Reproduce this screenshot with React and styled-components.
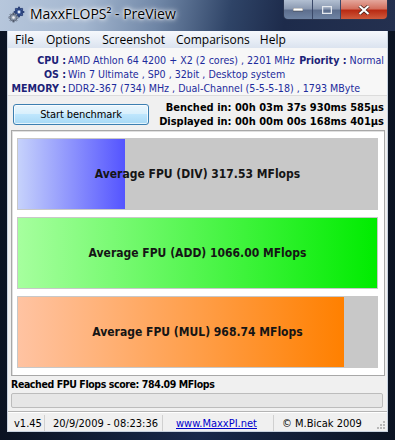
import React from "react";
import styled, { createGlobalStyle } from "styled-components";

const GlobalStyle = createGlobalStyle`
  html, body {
    margin: 0;
    padding: 0;
    background: #1a2440;
  }
  * {
    box-sizing: border-box;
  }
`;

const tahoma = `"DejaVu Sans Condensed", "DejaVu Sans", sans-serif`;
const segoe = `"Open Sans", "Noto Sans", sans-serif`;

const Window = styled.div`
  width: 395px;
  height: 440px;
  display: flex;
  flex-direction: column;
  overflow: hidden;
  background: linear-gradient(90deg, #0b1322 0%, #18284a 50%, #0b1322 100%);
`;

const TitleBar = styled.div`
  height: 31px;
  flex: none;
  display: flex;
  align-items: flex-start;
  padding-left: 8px;
  background: linear-gradient(
    100deg,
    #b7c7dc 0%,
    #a3b6cf 22%,
    #6f86a6 40%,
    #2f4467 58%,
    #1d2b4b 72%,
    #24304f 100%
  );
`;

const TitleIcon = styled.svg`
  width: 17px;
  height: 17px;
  margin-top: 6px;
  flex: none;
`;

const TitleText = styled.div`
  margin: 4px 0 0 5px;
  font-family: ${segoe};
  font-size: 14px;
  color: #000;
  text-shadow: 0 0 6px #fff, 0 0 4px #fff, 0 0 2px #fff;
  flex: 1;
`;

const CaptionButtons = styled.div`
  display: flex;
  margin-right: 7px;
  border: 1px solid #2a3550;
  border-top: none;
  border-radius: 0 0 5px 5px;
  overflow: hidden;
`;

const CaptionButton = styled.div`
  width: ${(p) => (p.close ? "47px" : "28px")};
  height: 19px;
  display: flex;
  align-items: center;
  justify-content: center;
  border-left: ${(p) => (p.first ? "none" : "1px solid #3a4868")};
  background: ${(p) =>
    p.close
      ? "linear-gradient(180deg, #e4a79c 0%, #d3705f 45%, #b92b14 55%, #cf5a3c 100%)"
      : "linear-gradient(180deg, #b3c0d2 0%, #8c9ab2 45%, #5e6f8e 55%, #6e83a3 100%)"};
`;

const Frame = styled.div`
  flex: 1;
  display: flex;
  padding: 0 7px 8px 7px;
`;

const Client = styled.div`
  flex: 1;
  min-width: 0;
  display: flex;
  flex-direction: column;
  background: #f0f0f0;
  border: 1px solid #c8d2df;
  border-top: none;
`;

const MenuBar = styled.div`
  height: 17px;
  flex: none;
  display: flex;
  align-items: center;
  padding-left: 4px;
  background: linear-gradient(180deg, #f6f8fc 0%, #e6ecf5 60%, #dbe3ef 100%);
  font-family: ${segoe};
  font-size: 12px;
  color: #000;
`;

const MenuItem = styled.span`
  padding: 0 5px 0 3px;
  margin-right: ${(p) => p.gap || 0}px;
`;

const InfoPanel = styled.div`
  display: grid;
  grid-template-columns: 60px auto minmax(0, 1fr) auto;
  padding: 5px 3px 0 0;
  height: 48px;
  flex: none;
  border-bottom: 1px solid #dcdcdc;
  background: #f7f7f7;
  font-family: ${tahoma};
  font-size: 10.6px;
  line-height: 14px;
`;

const InfoLabel = styled.span`
  text-align: right;
  font-weight: bold;
  color: #1c2378;
  padding-right: 2px;
`;

const InfoValue = styled.span`
  color: #1d2b9c;
  white-space: nowrap;
  grid-column: ${(p) => (p.wide ? "2 / 5" : "auto")};
`;

const Priority = styled.span`
  grid-column: 4;
  color: #1d2b9c;
  white-space: nowrap;

  b {
    color: #1c2378;
  }
`;

const ActionRow = styled.div`
  height: 34px;
  flex: none;
  display: flex;
  justify-content: space-between;
  align-items: flex-start;
  padding: 5px 3px 0 5px;
`;

const StartButton = styled.button`
  width: 136px;
  height: 21px;
  margin-top: 3px;
  border: 1px solid #3c7fb1;
  border-radius: 3px;
  background: linear-gradient(180deg, #eaf6fd 0%, #d9f0fc 45%, #bee6fd 50%, #a7d9f5 100%);
  box-shadow: inset 0 0 0 1px rgba(255, 255, 255, 0.7);
  font-family: ${tahoma};
  font-size: 11px;
  letter-spacing: -0.1px;
  color: #000;
  padding: 0;
`;

const Timings = styled.div`
  text-align: right;
  font-family: ${tahoma};
  font-weight: bold;
  font-size: 11px;
  line-height: 14px;
  color: #000;
`;

const BarsPanel = styled.div`
  flex: none;
  display: flex;
  flex-direction: column;
  gap: 7px;
  margin: 0 2px 0 3px;
  padding: 7px 6px 7px 5px;
  background: #fff;
  border: 1px solid #a8a8a8;
  box-shadow: inset 1px 1px 0 #e0e0e0;
`;

const Bar = styled.div`
  position: relative;
  height: 72px;
  padding: 1px;
  background: #c8c8c8;
`;

const Fill = styled.div`
  height: 100%;
  background: linear-gradient(90deg, ${(p) => p.from} 0%, ${(p) => p.to} 100%);
`;

const BarLabel = styled.div`
  position: absolute;
  inset: 0;
  display: flex;
  align-items: center;
  justify-content: center;
  font-family: ${tahoma};
  font-weight: bold;
  font-size: 12px;
  color: #151515;
`;

const Score = styled.div`
  flex: none;
  padding: 1px 3px 0;
  font-family: ${tahoma};
  font-weight: bold;
  font-size: 10.5px;
  letter-spacing: -0.4px;
  line-height: 14px;
  color: #000;
`;

const Progress = styled.div`
  flex: none;
  height: 15px;
  margin: 2px 4px 3px 3px;
  background: #e6e6e6;
  border: 1px solid #bcbcbc;
  border-radius: 2px;
`;

const StatusBar = styled.div`
  flex: 1;
  display: flex;
  align-items: stretch;
  padding-top: 3px;
  border-top: 1px solid #b4b4b4;
  box-shadow: inset 0 1px 0 #fff;
  font-family: ${tahoma};
  font-size: 11px;
  color: #000;
`;

const StatusCell = styled.div`
  width: ${(p) => p.w}px;
  display: flex;
  align-items: center;
  padding-left: ${(p) => p.pad || 5}px;
  border-right: ${(p) => (p.last ? "none" : "1px solid #d0d0d0")};
  white-space: nowrap;
`;

const Link = styled.a`
  color: #0000cc;
  text-decoration: underline;
`;

const Grip = styled.svg`
  margin-left: auto;
  margin-right: 2px;
  align-self: flex-end;
  margin-bottom: 2px;
`;

const bars = [
  { name: "DIV", value: 317.53, from: "#c6d2fb", to: "#5454ff" },
  { name: "ADD", value: 1066.0, from: "#a6ff9e", to: "#00ec00" },
  { name: "MUL", value: 968.74, from: "#ffc3a2", to: "#ff8000" },
];

function Gears() {
  return (
    <TitleIcon viewBox="0 0 17 17">
      <g fill="#3d5a9a" stroke="#1c2f60" strokeWidth="0.5">
        <circle cx="11" cy="6" r="4" />
        {[0, 45, 90, 135, 180, 225, 270, 315].map((a) => (
          <rect key={a} x="10.2" y="1" width="1.6" height="2.2" transform={`rotate(${a} 11 6)`} />
        ))}
      </g>
      <circle cx="11" cy="6" r="1.4" fill="#dfe8f6" />
      <g fill="#9aa6b8" stroke="#4c5668" strokeWidth="0.5">
        <circle cx="5.5" cy="11.5" r="3.6" />
        {[0, 45, 90, 135, 180, 225, 270, 315].map((a) => (
          <rect key={a} x="4.8" y="6.9" width="1.4" height="2" transform={`rotate(${a} 5.5 11.5)`} />
        ))}
      </g>
      <circle cx="5.5" cy="11.5" r="1.2" fill="#f0f0f0" />
    </TitleIcon>
  );
}

export default function App() {
  const max = Math.max(...bars.map((b) => b.value));

  return (
    <>
      <GlobalStyle />
      <Window>
        <TitleBar>
          <Gears />
          <TitleText>
            MaxxFLOPS² - PreView
          </TitleText>
          <CaptionButtons>
            <CaptionButton first>
              <svg width="10" height="4">
                <rect x="0" y="0" width="10" height="3" fill="#fff" stroke="#333" strokeWidth="0.5" />
              </svg>
            </CaptionButton>
            <CaptionButton>
              <svg width="10" height="8">
                <rect x="0.5" y="0.5" width="9" height="7" fill="none" stroke="#e4e8ee" strokeWidth="1.5" />
              </svg>
            </CaptionButton>
            <CaptionButton close>
              <svg width="12" height="10" viewBox="0 0 12 10">
                <path d="M1.5 1 L10.5 9 M10.5 1 L1.5 9" stroke="#3a1a14" strokeWidth="3.4" />
                <path d="M1.5 1 L10.5 9 M10.5 1 L1.5 9" stroke="#fff" strokeWidth="2.2" />
              </svg>
            </CaptionButton>
          </CaptionButtons>
        </TitleBar>
        <Frame>
          <Client>
            <MenuBar>
              <MenuItem gap={4}>File</MenuItem>
              <MenuItem gap={4}>Options</MenuItem>
              <MenuItem gap={3}>Screenshot</MenuItem>
              <MenuItem gap={2}>Comparisons</MenuItem>
              <MenuItem>Help</MenuItem>
            </MenuBar>

            <InfoPanel>
              <InfoLabel>CPU :</InfoLabel>
              <InfoValue>AMD Athlon 64 4200 + X2 (2 cores) , 2201 MHz</InfoValue>
              <span />
              <Priority>
                <b>Priority :</b> Normal
              </Priority>
              <InfoLabel>OS :</InfoLabel>
              <InfoValue wide>Win 7 Ultimate , SP0 , 32bit , Desktop system</InfoValue>
              <InfoLabel>MEMORY :</InfoLabel>
              <InfoValue wide>DDR2-367 (734) MHz , Dual-Channel (5-5-5-18) , 1793 MByte</InfoValue>
            </InfoPanel>

            <ActionRow>
              <StartButton type="button">Start benchmark</StartButton>
              <Timings>
                <div>Benched in: 00h 03m 37s 930ms 585µs</div>
                <div>Displayed in: 00h 00m 00s 168ms 401µs</div>
              </Timings>
            </ActionRow>

            <BarsPanel>
              {bars.map((b) => (
                <Bar key={b.name}>
                  <Fill
                    from={b.from}
                    to={b.to}
                    style={{ width: `${(b.value / max) * 100}%` }}
                  />
                  <BarLabel>
                    Average FPU ({b.name}) {b.value.toFixed(2)} MFlops
                  </BarLabel>
                </Bar>
              ))}
            </BarsPanel>

            <Score>Reached FPU Flops score: 784.09 MFlops</Score>
            <Progress />

            <StatusBar>
              <StatusCell w={37} pad={6}>v1.45</StatusCell>
              <StatusCell w={118} pad={8}>20/9/2009 - 08:23:36</StatusCell>
              <StatusCell w={111} pad={13}>
                <Link href="#">www.MaxxPI.net</Link>
              </StatusCell>
              <StatusCell w={96} pad={8} last>
                © M.Bicak 2009
              </StatusCell>
              <Grip width="8" height="8" viewBox="0 0 8 8">
                {[
                  [6, 0],
                  [6, 3],
                  [3, 3],
                  [6, 6],
                  [3, 6],
                  [0, 6],
                ].map(([x, y]) => (
                  <rect key={`${x}-${y}`} x={x} y={y} width="2" height="2" fill="#b8b8b8" />
                ))}
              </Grip>
            </StatusBar>
          </Client>
        </Frame>
      </Window>
    </>
  );
}
